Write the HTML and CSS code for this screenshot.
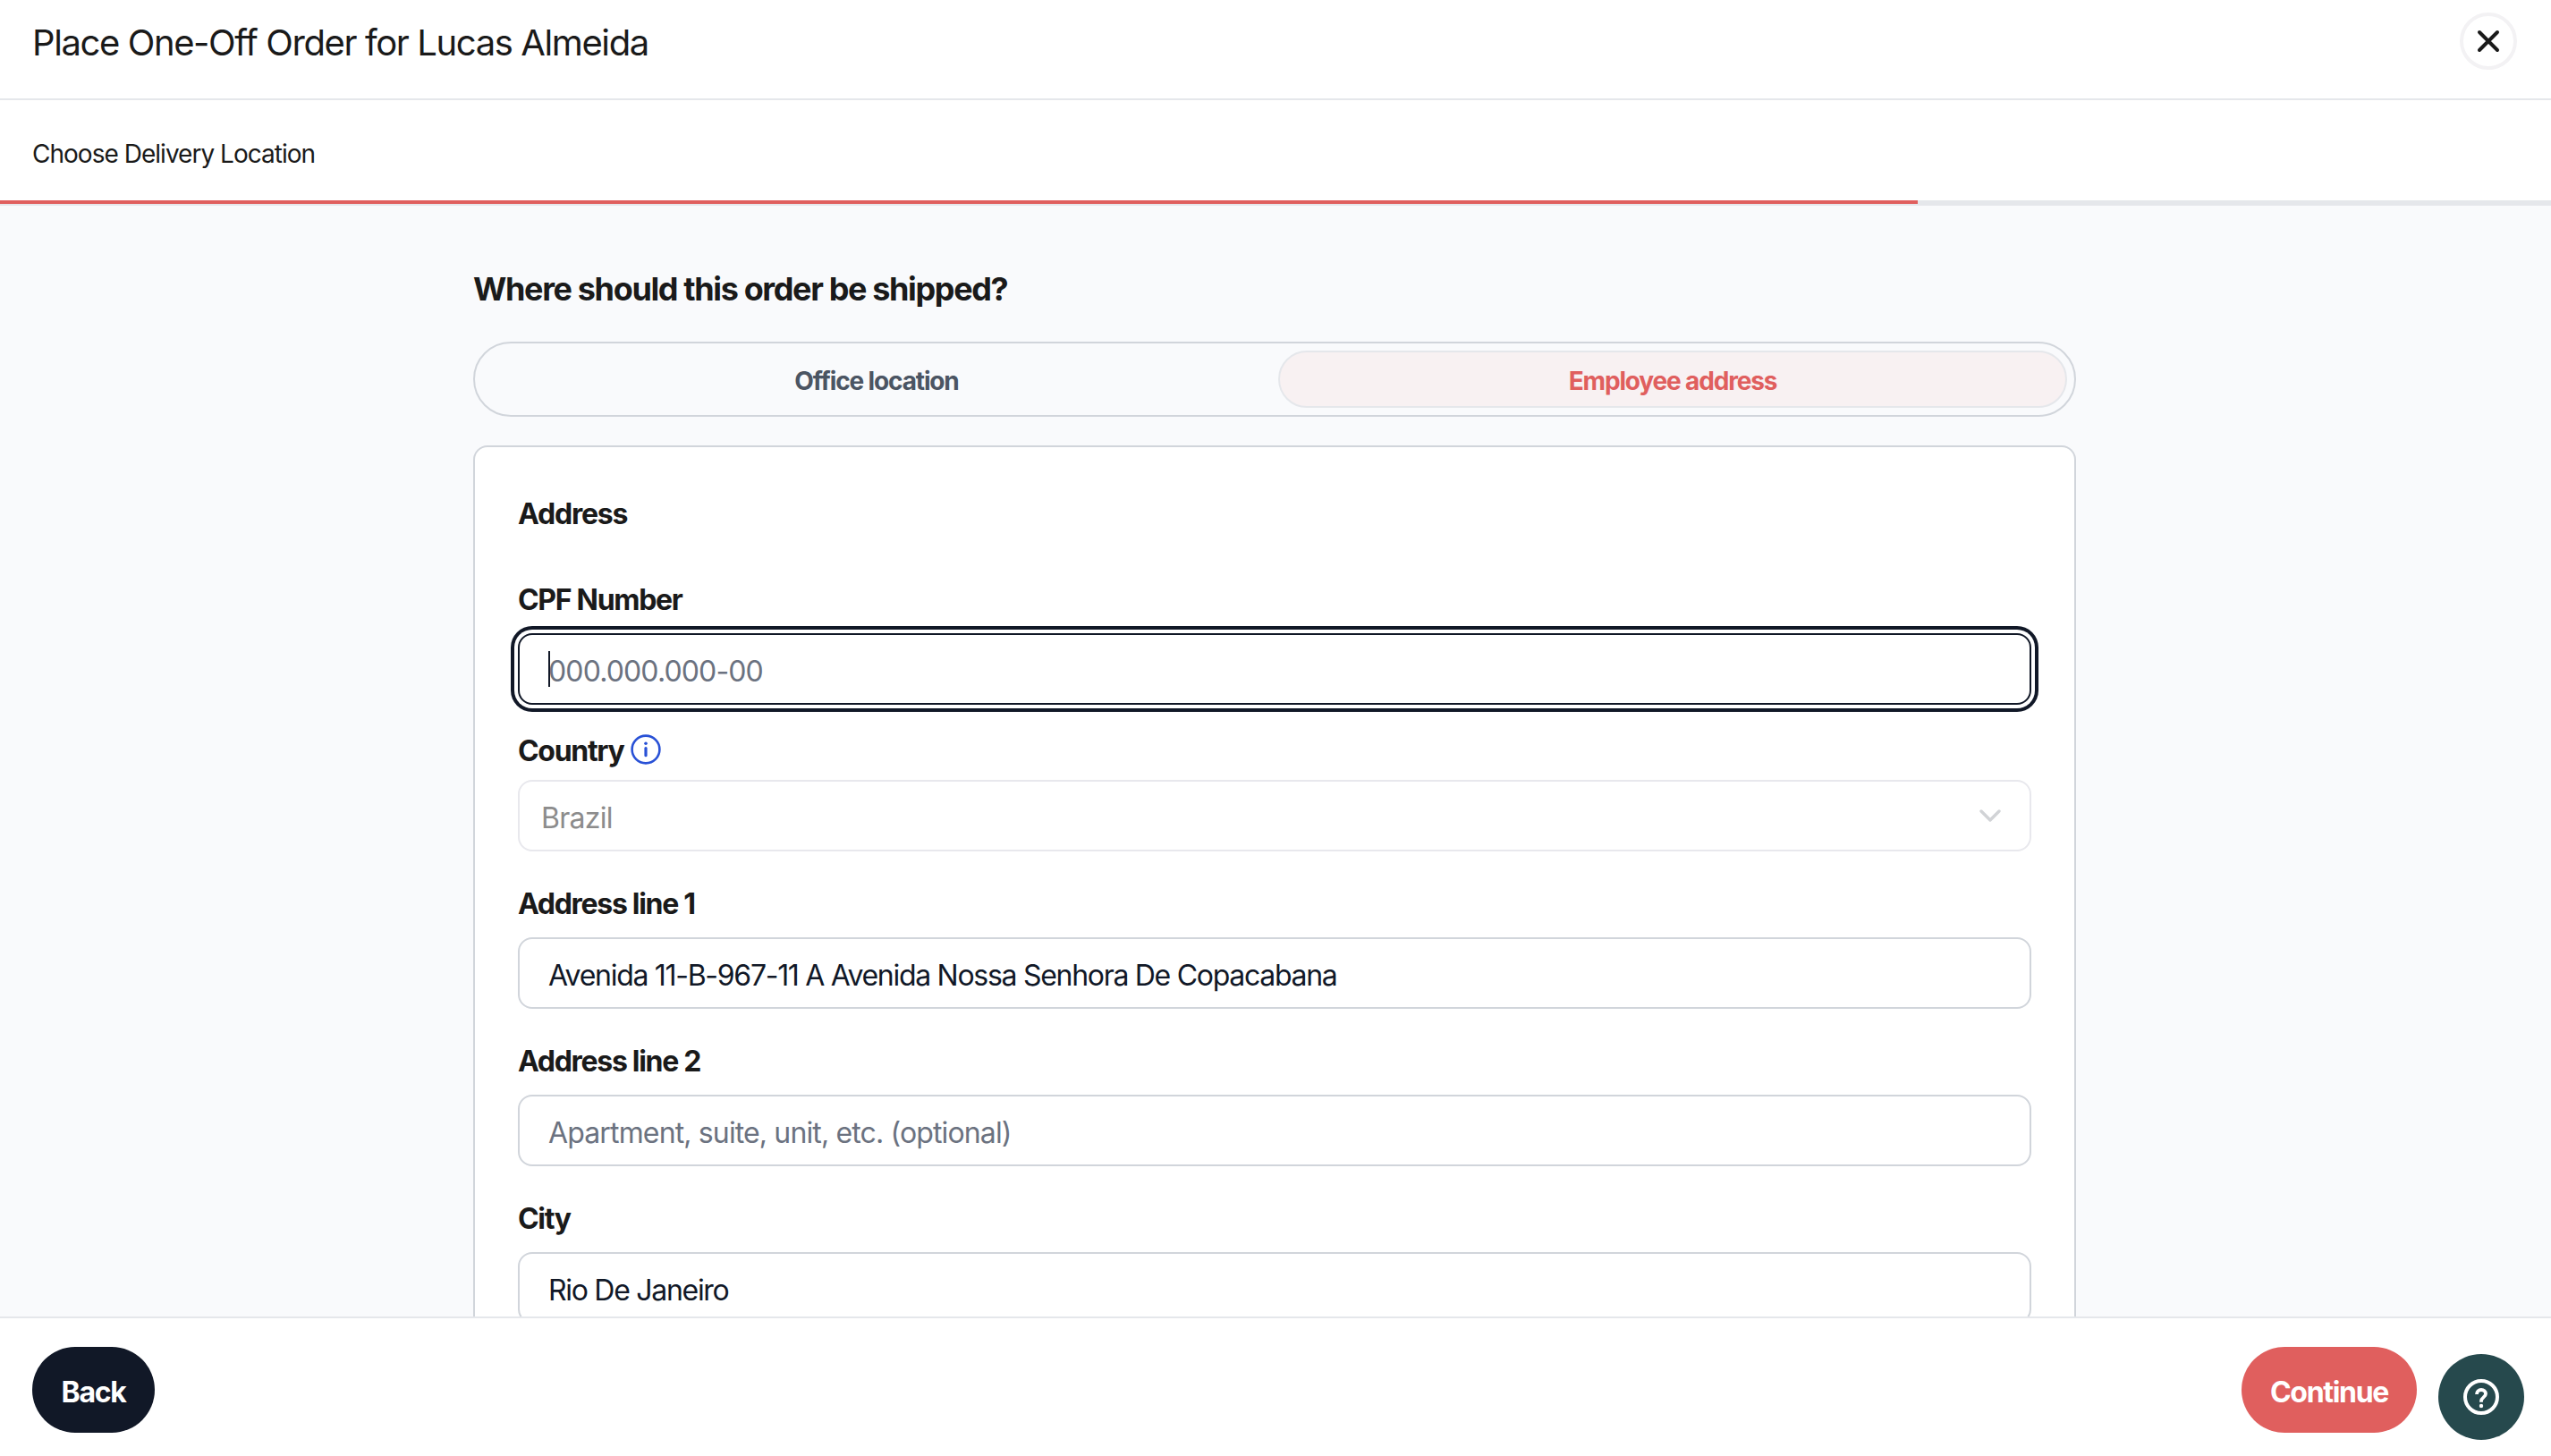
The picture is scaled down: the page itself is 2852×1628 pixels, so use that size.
FILE: index.html
```
<!DOCTYPE html>
<html lang="en">
<head>
  <meta charset="utf-8">
  <title>Place One-Off Order</title>
  <link rel="stylesheet" href="styles.css">
</head>
<body>
  <header class="header">
    <h1 class="header-title">Place One-Off Order for Lucas Almeida</h1>
    <button class="close-button" aria-label="Close">
      <svg width="28" height="28" viewBox="0 0 28 28" fill="none" stroke="currentColor" stroke-width="4" stroke-linecap="round">
        <path d="M4 4l20 20M24 4L4 24"/>
      </svg>
    </button>
  </header>

  <div class="step">
    <div class="step-title">Choose Delivery Location</div>
  </div>
  <div class="progress"><div class="progress-bar"></div></div>

  <main class="content">
    <div class="form">
      <h2 class="form-title">Where should this order be shipped?</h2>

      <div class="tabs">
        <button class="tab">Office location</button>
        <button class="tab tab-active">Employee address</button>
      </div>

      <div class="card">
        <div class="card-title">Address</div>

        <div class="field field-cpf">
          <label class="label" for="cpf">CPF Number</label>
          <div class="input-wrap">
            <input class="input input-focused" id="cpf" type="text" placeholder="000.000.000-00">
            <span class="caret"></span>
          </div>
        </div>

        <div class="field">
          <div class="label-row">
            <span class="label">Country</span>
            <svg class="info-icon" width="34" height="34" viewBox="0 0 34 34" fill="none">
              <circle cx="17" cy="17" r="15.4" stroke="currentColor" stroke-width="2.6"/>
              <circle cx="17" cy="10.3" r="1.8" fill="currentColor"/>
              <path d="M17 15.5v8.2" stroke="currentColor" stroke-width="3.2" stroke-linecap="round"/>
            </svg>
          </div>
          <div class="select">
            <span>Brazil</span>
            <svg width="24" height="14" viewBox="0 0 24 14" fill="none" stroke="currentColor" stroke-width="3.4" stroke-linecap="round" stroke-linejoin="round">
              <path d="M2 2l10 10L22 2"/>
            </svg>
          </div>
        </div>

        <div class="field">
          <label class="label" for="line1">Address line 1</label>
          <input class="input" id="line1" type="text" value="Avenida 11-B-967-11 A Avenida Nossa Senhora De Copacabana">
        </div>

        <div class="field">
          <label class="label" for="line2">Address line 2</label>
          <input class="input" id="line2" type="text" placeholder="Apartment, suite, unit, etc. (optional)">
        </div>

        <div class="field">
          <label class="label" for="city">City</label>
          <input class="input" id="city" type="text" value="Rio De Janeiro">
        </div>
      </div>
    </div>
  </main>

  <footer class="footer">
    <button class="button button-back">Back</button>
    <button class="button button-continue">Continue</button>
  </footer>

  <button class="help-button" aria-label="Help">
    <svg width="40" height="40" viewBox="0 0 40 40" fill="none" stroke="currentColor">
      <circle cx="20" cy="20" r="18" stroke-width="4"/>
      <path d="M15 17c0-3 2.2-5 5-5s5 1.8 5 4.5c0 3.8-5 4-5 8v1.3" stroke-width="3.8"/>
      <circle cx="20" cy="30" r="2.2" fill="currentColor" stroke="none"/>
    </svg>
  </button>
</body>
</html>
```
FILE: styles.css
```
* {
  box-sizing: border-box;
}

body {
  margin: 0;
  height: 100vh;
  display: flex;
  flex-direction: column;
  overflow: hidden;
  background-color: #ffffff;
  color: #1a1a1a;
  font-family: Inter, "Liberation Sans", sans-serif;
}

button,
input {
  font-family: inherit;
}

.header {
  height: 112px;
  padding: 14px 38px 0 36px;
  display: flex;
  justify-content: space-between;
  align-items: flex-start;
  border-bottom: 2px solid #e5e7eb;
  flex-shrink: 0;
}

.header-title {
  margin: 0;
  padding-top: 8px;
  font-size: 40px;
  line-height: 52px;
  font-weight: 400;
  letter-spacing: -1.4px;
}

.close-button {
  width: 64px;
  height: 64px;
  padding: 0;
  display: flex;
  align-items: center;
  justify-content: center;
  border: 4px solid #f3f2f4;
  border-radius: 50%;
  background-color: #ffffff;
  color: #1a1a1a;
}

.step {
  height: 112px;
  padding: 40px 36px 0;
  flex-shrink: 0;
}

.step-title {
  font-size: 28px;
  line-height: 40px;
  letter-spacing: -0.98px;
}

.progress {
  height: 6px;
  background-color: #e5e7eb;
  flex-shrink: 0;
}

.progress-bar {
  width: 2144px;
  height: 4px;
  background-color: #e05f5e;
}

.content {
  flex: 1;
  min-height: 0;
  overflow: hidden;
  background-color: #f9fafc;
}

.form {
  width: 1792px;
  margin-left: 529px;
  padding-top: 69px;
}

.form-title {
  margin: 0 0 35px;
  font-size: 36px;
  line-height: 48px;
  font-weight: 700;
  letter-spacing: -1.36px;
}

.tabs {
  height: 84px;
  padding: 8px;
  display: flex;
  gap: 8px;
  border: 2px solid #d1d5db;
  border-radius: 42px;
}

.tab {
  flex: 1;
  padding: 3px 0 0;
  border: 2px solid transparent;
  border-radius: 32px;
  background: none;
  color: #4b5563;
  font-size: 28px;
  font-weight: 700;
  letter-spacing: -1.15px;
}

.tab-active {
  border-color: #e5e7eb;
  background-color: #f8f1f2;
  color: #e05f5e;
}

.card {
  height: 1200px;
  margin-top: 32px;
  padding: 53px 48px 0;
  border: 2px solid #d1d5db;
  border-radius: 16px;
  background-color: #ffffff;
}

.card-title {
  font-size: 32px;
  line-height: 44px;
  font-weight: 700;
  letter-spacing: -1.2px;
}

.field {
  margin-bottom: 37px;
}

.field-cpf {
  margin: 52px 0 28px;
}

.label {
  display: block;
  margin-bottom: 15px;
  font-size: 32px;
  line-height: 44px;
  font-weight: 700;
  letter-spacing: -1.3px;
}

.label-row {
  display: flex;
  gap: 7px;
  height: 56px;
  padding-top: 2px;
}

.label-row .label {
  margin-bottom: 0;
}

.info-icon {
  margin-top: 3px;
  color: #2951d6;
}

.input-wrap {
  position: relative;
}

.input {
  display: block;
  width: 100%;
  height: 80px;
  padding: 4px 32px 0;
  border: 2px solid #d1d5db;
  border-radius: 16px;
  outline: none;
  background-color: #ffffff;
  color: #111827;
  font-size: 32px;
  letter-spacing: -1.29px;
}

.input::placeholder {
  color: #6b7280;
  opacity: 1;
  letter-spacing: -0.86px;
}

.input-focused {
  border-color: #111827;
  box-shadow: 0 0 0 4px #ffffff, 0 0 0 8px #111827;
}

/* text cursor over the focused field */
.caret {
  position: absolute;
  left: 34px;
  top: 20px;
  width: 2px;
  height: 40px;
  background-color: #111827;
}

.select {
  height: 80px;
  padding: 4px 32px 0 24px;
  display: flex;
  align-items: center;
  justify-content: space-between;
  border: 2px solid #e8e8ed;
  border-radius: 16px;
  color: #8c8c8c;
  font-size: 32px;
  letter-spacing: -0.75px;
}

.select svg {
  margin-top: -4px;
  color: #d1d3d6;
}

.footer {
  height: 156px;
  padding: 32px 150px 0 36px;
  display: flex;
  justify-content: space-between;
  align-items: flex-start;
  border-top: 2px solid #e5e7eb;
  background-color: #ffffff;
  flex-shrink: 0;
}

.button {
  height: 96px;
  padding: 4px 0 0;
  border: none;
  border-radius: 48px;
  color: #ffffff;
  font-size: 32px;
  font-weight: 700;
  letter-spacing: -1.3px;
}

.button-back {
  width: 137px;
  background-color: #111827;
}

.button-continue {
  width: 196px;
  background-color: #e05f5e;
}

/* floats above the footer */
.help-button {
  position: absolute;
  right: 30px;
  bottom: 18px;
  width: 96px;
  height: 96px;
  padding: 0;
  display: flex;
  align-items: center;
  justify-content: center;
  border: none;
  border-radius: 50%;
  background-color: #26494d;
  color: #ffffff;
}
```
